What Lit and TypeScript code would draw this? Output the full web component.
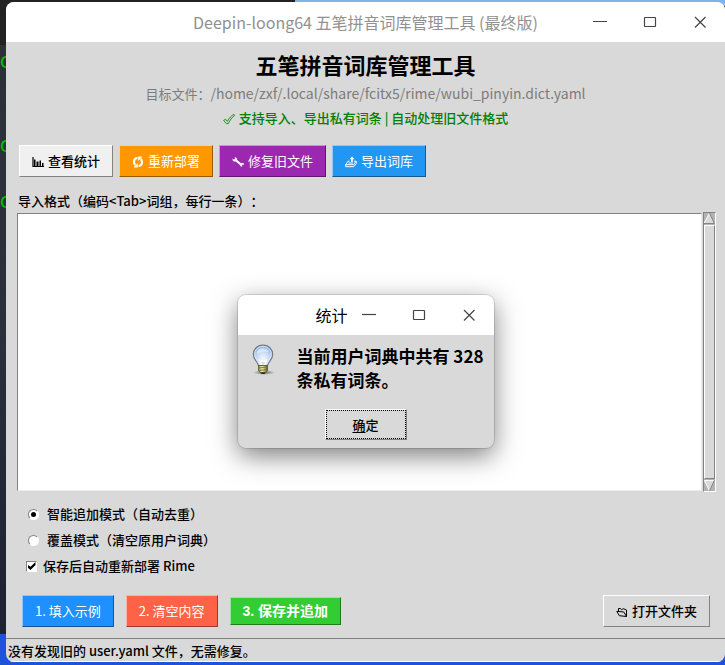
import { LitElement, html, svg, css } from "lit";
import { customElement, state } from "lit/decorators.js";

const chart = html`<svg class="glyph" viewBox="0 0 12 12" aria-hidden="true">
  <path d="M1 1v9.500h11" fill="none" stroke="currentColor" stroke-width="1.200" />
  <path d="M2 3.500h1.500v6.500H2zM4.500 5.500h2v4.500h-2zM7.500 4.500h1.500v5.500H7.500zM10 7h1.500v3H10z" fill="currentColor" />
</svg>`;

const refresh = html`<svg class="glyph" viewBox="0 0 12 12" aria-hidden="true">
  <path d="M5.500 2.200C3 2 2 3.800 2 6c0 1.600.7 2.600 1.500 3M6.500 9.800C9 10 10 8.200 10 6c0-1.600-.7-2.600-1.500-3" fill="none" stroke="currentColor" stroke-width="2.200" />
  <path d="M5.800 7v4.500H1.600zM6.200 5V.5h4.200z" fill="currentColor" />
</svg>`;

const wrench = html`<svg class="glyph" viewBox="0 0 12 12" aria-hidden="true">
  <path d="M3.500 4l5.500 4.500" fill="none" stroke="currentColor" stroke-width="2.200" />
  <path d="M2.800 1.200L3 3 1.800 3.500.6 2.600C.3 4.500 1.500 5.800 3.200 5.600l1.800-1.200c.5-1.700-.5-3.200-2.200-3.200zM8 8.300L9.800 6.900c1.400-.2 2.300.8 2.200 2.100l-1.300-.4-.8.800.4 1.300c-1.300.1-2.400-.8-2.300-2.400z" fill="currentColor" />
</svg>`;

const outbox = html`<svg class="glyph" viewBox="0 0 12 12" aria-hidden="true">
  <path d="M7 .5l2.500 2.700H7.800V6H6V3.200H4.500z" fill="currentColor" />
  <path d="M4.500 5.200H3L.7 8.700h8L11 5.200H9M.7 8.700v2h8l2.600-3.200V5.300M3.500 7h4.500" fill="none" stroke="currentColor" stroke-width="1" />
</svg>`;

const folder = html`<svg class="glyph" viewBox="0 0 12 12" aria-hidden="true">
  <path d="M2.500 5V2.500h2l1 1.200 2-1 3 1.300v6.500" fill="none" stroke="currentColor" stroke-width="1" />
  <path d="M.8 5.300l7 .7 2.700 4.500-7.200-.8z" fill="none" stroke="currentColor" stroke-width="1" />
</svg>`;

const check = html`<svg class="glyph" viewBox="0 0 12 12" aria-hidden="true">
  <path d="M.6 7.300l2-1 1.800 2C6 5.200 8.500 2.500 11 1.300l.6 1.200C9 4.500 7 7 5.300 10.700H3.300z" fill="#c4dcc4" stroke="currentColor" stroke-width=".8" />
</svg>`;

const bulb = html`<svg class="bulb" viewBox="0 0 32 32" aria-hidden="true">
  <defs>
    <radialGradient id="glass" cx=".5" cy=".65" r=".6">
      <stop offset="0" stop-color="#f2f6fb" />
      <stop offset=".5" stop-color="#ccdcf2" />
      <stop offset="1" stop-color="#83aee8" />
    </radialGradient>
    <linearGradient id="base">
      <stop offset="0" stop-color="#8b8b3c" />
      <stop offset=".4" stop-color="#f2f2a8" />
      <stop offset="1" stop-color="#5d5d22" />
    </linearGradient>
    <radialGradient id="shade">
      <stop offset="0" stop-color="#000" stop-opacity=".55" />
      <stop offset="1" stop-color="#000" stop-opacity="0" />
    </radialGradient>
  </defs>
  <ellipse cx="17" cy="28.500" rx="11" ry="2.500" fill="url(#shade)" />
  <path d="M16 1C10 1 6.300 5.300 6.300 10.400c0 5.100 4.200 7.100 5 11.100h9.400c.8-4 5-6 5-11.100C25.700 5.300 22 1 16 1z" fill="url(#glass)" stroke="#6f7680" stroke-width="1.100" />
  <path d="M16 2.400C11 2.400 7.700 6 7.700 10.300c0 4.300 3.800 6.300 4.800 10h7c1-3.700 4.800-5.700 4.800-10C24.300 6 21 2.400 16 2.400z" fill="none" stroke="#e8f1fd" stroke-width=".8" />
  <path d="M9.500 10C10 6.500 12 4.500 15 4.300c3.500 0 6 1.500 7 4-4-1.500-8-1-12.500 1.700z" fill="#fff" opacity=".5" />
  <path d="M14 21l-1.500-5 2.500 1.500L16 16l1.200 1.500 2.300-1.500L18 21" fill="none" stroke="#fff" stroke-width="1.200" />
  <path d="M11.500 21.500h9v5l-2 2.300h-5l-2-2.300z" fill="url(#base)" stroke="#55552a" stroke-width=".8" />
  <path d="M11.500 24l9-1M12 26.500l8.500-1" stroke="#6c6c30" stroke-width=".8" />
  <path d="M13.500 28.300h5l-1 1.700h-3z" fill="#2b2b2b" />
</svg>`;

const controls = [
  { name: "最小化", shape: svg`<path d="M1 7.500h14" />` },
  { name: "最大化", shape: svg`<rect x="2.500" y="3.500" width="11" height="9" rx=".5" />` },
  { name: "关闭", shape: svg`<path d="M3 3l10.500 10.500M13.500 3L3 13.500" />` },
];

const windowControls = () => html`<div class="controls">
  ${controls.map(
    (c) => html`<button class="control" aria-label=${c.name}>
      <svg viewBox="0 0 16 16" width="16" height="16">${c.shape}</svg>
    </button>`
  )}
</div>`;

const actions = [
  { kind: "plain", icon: chart, text: "查看统计" },
  { kind: "orange", icon: refresh, text: "重新部署" },
  { kind: "purple", icon: wrench, text: "修复旧文件" },
  { kind: "blue", icon: outbox, text: "导出词库" },
];

@customElement("app-root")
export class AppRoot extends LitElement {
  @state() mode = "append";

  static styles = css`
    :host {
      display: block;
      font: 500 13px/20px "Noto Sans CJK SC", sans-serif;
      text-spacing-trim: space-all;
      color: #000;
    }
    * {
      box-sizing: border-box;
    }
    .desktop {
      position: relative;
      min-height: 100vh;
      padding: 2px 0 3px 6px;
      display: flex;
      overflow: hidden;
      background:
        linear-gradient(90deg, #222 295px, #7cb5ec 295px) top / 100% 6px no-repeat,
        linear-gradient(#1f52da, #1f52da) bottom / 100% 31px no-repeat,
        linear-gradient(#222 45px, #2c3038 45px, #2a303c 50%, #1c2030);
    }
    .terminal {
      position: absolute;
      left: 0;
      top: 51px;
      display: grid;
      grid-template-rows: 84px 56px 20px;
      font-size: 16px;
      color: #0b0;
    }
    .window {
      position: relative;
      flex: 1;
      display: flex;
      flex-direction: column;
      border-radius: 8px;
      overflow: hidden;
      background: #d9d9d9;
    }
    .titlebar {
      height: 40px;
      flex: none;
      display: grid;
      grid-template-columns: 1fr auto 1fr;
      align-items: center;
      background: #fff;
      font-size: 16px;
      font-weight: 400;
      color: #919191;
    }
    .caption {
      grid-column: 2;
      white-space: nowrap;
    }
    .controls {
      display: flex;
      justify-self: end;
      gap: 8px;
      padding-right: 4px;
    }
    .control {
      width: 42px;
      height: 40px;
      padding: 0;
      border: 0;
      display: grid;
      place-items: center;
      background: none;
    }
    .control svg {
      fill: none;
      stroke: #444;
      stroke-width: 1.2;
    }
    .heading {
      display: flex;
      flex-direction: column;
      align-items: center;
      padding-top: 6px;
    }
    h1 {
      margin: 0 0 2px;
      font-size: 22px;
      line-height: 32px;
      font-weight: 700;
    }
    .path,
    .note {
      margin: 0;
      line-height: 24px;
      white-space: nowrap;
    }
    .path {
      font-weight: 400;
      color: #7c7c7c;
    }
    .file {
      font-size: 14px;
      line-height: 20px;
    }
    .note {
      color: #008000;
    }
    .glyph {
      width: 12px;
      height: 12px;
      margin-right: 4px;
      vertical-align: -2px;
    }
    .toolbar {
      display: flex;
      gap: 6px;
      padding: 15px 13px 0;
    }
    .btn {
      height: 32px;
      padding: 0 12px;
      border: 1px solid;
      border-color: #fff #828282 #828282 #fff;
      background: #d9d9d9;
      color: #000;
      font: inherit;
      white-space: nowrap;
    }
    .plain {
      background: #f0f0f0;
    }
    .orange,
    .purple,
    .blue,
    .dodger,
    .tomato {
      color: #fff;
      font-weight: 400;
    }
    .orange {
      background: #ff9800;
      border-color: #ffd080 #995b00 #995b00 #ffd080;
    }
    .purple {
      background: #9c27b0;
      border-color: #d98ae6 #5e176a #5e176a #d98ae6;
    }
    .blue {
      background: #2196f3;
      border-color: #8fcaf9 #145a92 #145a92 #8fcaf9;
    }
    .dodger {
      background: #1e90ff;
      border-color: #8ec7ff #125699 #125699 #8ec7ff;
    }
    .tomato {
      background: #ff6347;
      border-color: #ffb1a3 #993b2b #993b2b #ffb1a3;
    }
    .green {
      height: 28px;
      background: #32cd32;
      border-color: #98e698 #1e7b1e #1e7b1e #98e698;
      color: #fff;
      font: 700 14px/20px "Liberation Sans", "Noto Sans CJK SC", sans-serif;
    }
    .field-label {
      padding: 14px 12px 1px;
    }
    .editor {
      flex: 1;
      min-height: 120px;
      display: flex;
      gap: 1px;
      padding: 0 9px 0 11px;
    }
    textarea {
      flex: 1;
      min-width: 0;
      margin: 1px 0;
      padding: 4px;
      resize: none;
      outline: 0;
      border: 1px solid;
      border-color: #828282 #ececec #ececec #828282;
      background: #fff;
      font: inherit;
    }
    .scrollbar {
      width: 13px;
      display: flex;
      flex-direction: column;
      border: 1px solid;
      border-color: #828282 #fff #fff #828282;
      background: #b3b3b3;
    }
    .arrow {
      display: block;
      width: 11px;
      height: 11px;
    }
    .thumb {
      flex: 1;
      margin: 1px 0;
      border: 1px solid;
      border-color: #fff #828282 #828282 #fff;
      background: #d9d9d9;
    }
    .options {
      display: flex;
      flex-direction: column;
      align-items: flex-start;
      gap: 6px;
      padding: 12px 20px 0;
    }
    .option {
      display: flex;
      align-items: center;
      gap: 6px;
    }
    .radio,
    .check {
      appearance: none;
      margin: 0;
      display: grid;
      place-items: center;
      border: 1px solid;
      border-color: #828282 #fff #fff #828282;
      background: #fff;
      width: 11px;
      height: 11px;
    }
    .radio {
      border-radius: 50%;
      margin: 0 2px;
    }
    .radio:checked::before {
      content: "";
      width: 5px;
      height: 5px;
      border-radius: 50%;
      background: #000;
    }
    .check:checked::before {
      content: "";
      width: 8px;
      height: 8px;
      background: #000;
      clip-path: polygon(0 35%, 38% 60%, 100% 0, 100% 38%, 38% 100%, 0 70%);
    }
    .footer {
      display: flex;
      align-items: center;
      gap: 12px;
      padding: 19px 15px 11px 16px;
    }
    .open {
      margin-left: auto;
    }
    .status {
      height: 24px;
      padding: 2px;
      border-top: 1px solid #828282;
      border-bottom: 1px solid #fff;
    }
    .dialog {
      position: absolute;
      top: 293px;
      left: calc(50% - 128px);
      width: 256px;
      border-radius: 8px;
      background: #d9d9d9;
      box-shadow: 0 0 0 1px rgba(0, 0, 0, 0.12), 0 8px 26px rgba(0, 0, 0, 0.5);
    }
    .dialog-bar {
      display: flex;
      align-items: center;
      justify-content: flex-end;
      height: 40px;
      border-radius: 8px 8px 0 0;
      background: #fff;
      font-size: 16px;
      font-weight: 400;
    }
    .message {
      display: flex;
      gap: 18px;
      padding: 9px 8px 0 9px;
    }
    .bulb {
      flex: none;
      width: 32px;
      height: 32px;
    }
    .message p {
      margin: 0;
      font-size: 17px;
      line-height: 24px;
      font-weight: 700;
    }
    .confirm {
      display: flex;
      justify-content: center;
      padding: 17px 0 8px;
    }
    .ok {
      width: 82px;
      height: 31px;
      outline: 1px dotted #000;
      outline-offset: -2px;
    }
    .key {
      text-decoration: underline;
      text-underline-offset: 2px;
    }
  `;

  render() {
    return html`<div class="desktop">
      <div class="terminal" aria-hidden="true"><span>C</span><span>C</span><span>C</span></div>
      <main class="window">
        <header class="titlebar">
          <span class="caption">Deepin-loong64 五笔拼音词库管理工具 (最终版)</span>
          ${windowControls()}
        </header>
        <section class="heading">
          <h1>五笔拼音词库管理工具</h1>
          <p class="path">目标文件：<span class="file">/home/zxf/.local/share/fcitx5/rime/wubi_pinyin.dict.yaml</span></p>
          <p class="note">${check}支持导入、导出私有词条 | 自动处理旧文件格式</p>
        </section>
        <nav class="toolbar">
          ${actions.map((a) => html`<button class="btn ${a.kind}">${a.icon}${a.text}</button>`)}
        </nav>
        <label class="field-label" for="entries">导入格式（编码&lt;Tab&gt;词组，每行一条）：</label>
        <div class="editor">
          <textarea id="entries"></textarea>
          <div class="scrollbar" aria-hidden="true">
            <svg class="arrow" viewBox="0 0 11 11">
              <path d="M5.500 0L11 11H0z" fill="#d9d9d9" />
              <path d="M5.500 0L0 10.500" stroke="#fff" />
              <path d="M5.500 0L10.500 10.500H0" fill="none" stroke="#828282" />
            </svg>
            <div class="thumb"></div>
            <svg class="arrow" viewBox="0 0 11 11">
              <path d="M0 0h11L5.500 11z" fill="#d9d9d9" />
              <path d="M11 .5H.5L5.500 11" fill="none" stroke="#fff" />
              <path d="M10.500 0l-5 11" stroke="#828282" />
            </svg>
          </div>
        </div>
        <div class="options">
          <label class="option">
            <input class="radio" type="radio" name="mode" .checked=${this.mode === "append"} @change=${() => (this.mode = "append")} />智能追加模式（自动去重）
          </label>
          <label class="option">
            <input class="radio" type="radio" name="mode" .checked=${this.mode === "replace"} @change=${() => (this.mode = "replace")} />覆盖模式（清空原用户词典）
          </label>
          <label class="option"><input class="check" type="checkbox" checked />保存后自动重新部署 Rime</label>
        </div>
        <div class="footer">
          <button class="btn dodger">1. 填入示例</button>
          <button class="btn tomato">2. 清空内容</button>
          <button class="btn green">3. 保存并追加</button>
          <button class="btn open">${folder}打开文件夹</button>
        </div>
        <footer class="status">没有发现旧的 user.yaml 文件，无需修复。</footer>

        <section class="dialog" role="dialog" aria-labelledby="dialog-title">
          <div class="dialog-bar"><span id="dialog-title">统计</span>${windowControls()}</div>
          <div class="message">
            ${bulb}
            <p>当前用户词典中共有 328 条私有词条。</p>
          </div>
          <div class="confirm">
            <button class="btn ok"><span class="key">确</span>定</button>
          </div>
        </section>
      </main>
    </div>`;
  }
}
